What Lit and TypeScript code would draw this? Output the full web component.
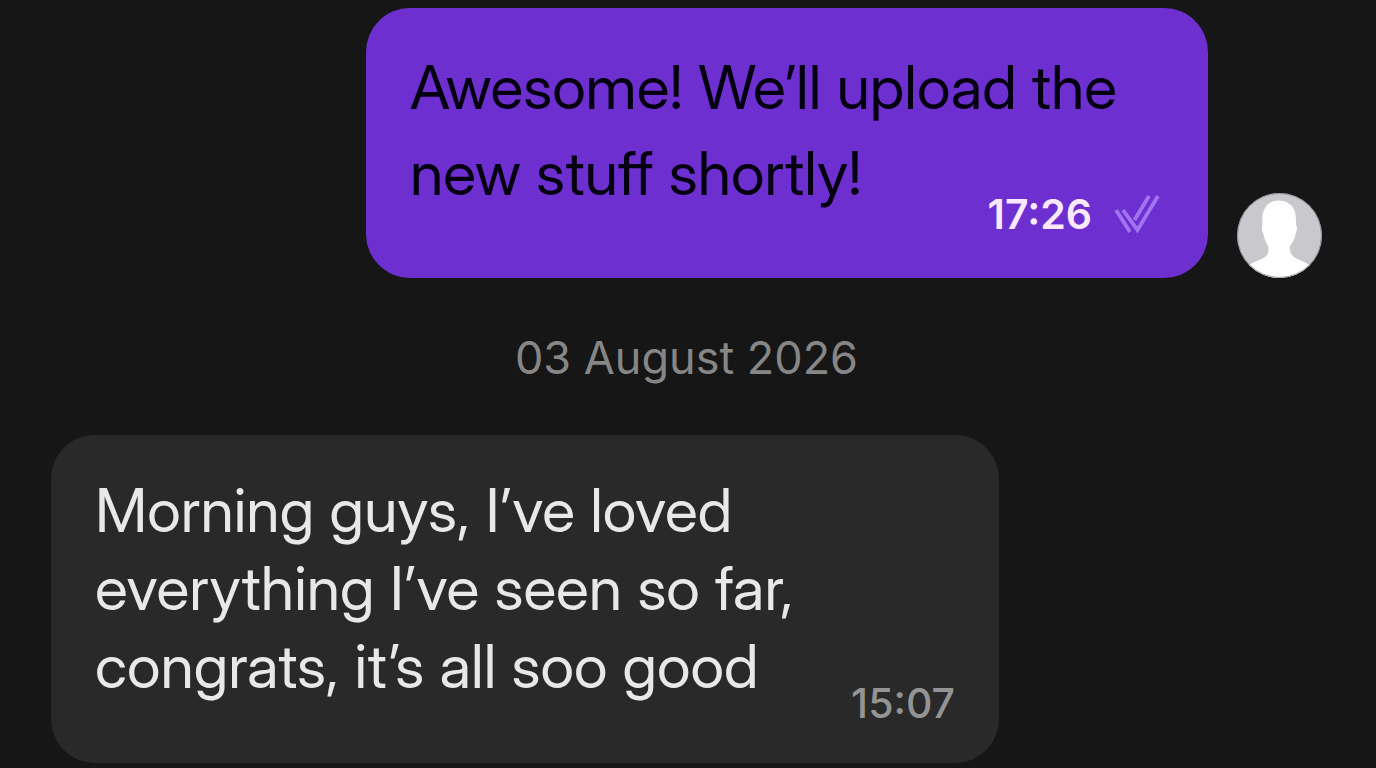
import { LitElement, html, css, nothing } from "lit";
import { customElement, property } from "lit/decorators.js";

interface Message {
  lines: string[];
  time: string;
  outgoing: boolean;
}

interface Day {
  label?: string;
  messages: Message[];
}

const days: Day[] = [
  {
    messages: [
      {
        lines: ["Awesome! We’ll upload the", "new stuff shortly!"],
        time: "17:26",
        outgoing: true,
      },
    ],
  },
  {
    label: "03 August 2026",
    messages: [
      {
        lines: [
          "Morning guys, I’ve loved",
          "everything I’ve seen so far,",
          "congrats, it’s all soo good",
        ],
        time: "15:07",
        outgoing: false,
      },
    ],
  },
];

@customElement("user-avatar")
export class UserAvatar extends LitElement {
  static styles = css`
    :host {
      display: block;
      flex: none;
      width: 85px;
      height: 85px;
    }
    .picture {
      display: block;
      width: 100%;
      height: 100%;
      border-radius: 50%;
    }
  `;

  render() {
    return html`<svg class="picture" viewBox="0 0 85 85" aria-hidden="true">
      <rect width="85" height="85" fill="#c8c8cd" />
      <path
        fill="#fff"
        d="M42 7.500C48 7.500 54 10.500 57 16C59 20 59 26 59 32C60.500 33 60 38 58.500 41C58 46 56 49 53 53C52.500 57 53 61 57 64C61 67 67 68 72.500 72V85H12V72C18 68 24 67 28 64C32 61 32 57 31 53C28.500 49 27 45 26.500 41C24.500 38 24.500 34 25.500 32C25 26 25 20 27.500 16C30.500 10 36 7.500 42 7.500Z"
      />
      <circle cx="42.500" cy="42.500" r="42" fill="none" stroke="#8f8f92" />
    </svg>`;
  }
}

@customElement("chat-message")
export class ChatMessage extends LitElement {
  @property({ attribute: false }) message!: Message;

  static styles = css`
    :host {
      display: block;
    }
    .row {
      display: flex;
      align-items: flex-end;
      gap: 29px;
    }
    .row.outgoing {
      justify-content: flex-end;
    }
    .bubble {
      box-sizing: border-box;
      width: 948px;
      max-width: 100%;
      padding: 36px 44px;
      border-radius: 44px;
      background: #292929;
      color: #e8e8e8;
    }
    .outgoing .bubble {
      width: 842px;
      padding-bottom: 40px;
      background: #6d2fcf;
      color: #050010;
    }
    .text {
      margin: 0;
      font-family: "Inter Display", Inter, "Liberation Sans", sans-serif;
      font-optical-sizing: auto;
      font-variation-settings: "opsz" 32;
      font-size: 61px;
      font-weight: 400;
      line-height: 78px;
    }
    .outgoing .text {
      line-height: 86px;
    }
    .line {
      display: block;
    }
    .meta {
      display: flex;
      justify-content: flex-end;
      align-items: center;
      gap: 22px;
      margin-top: -26px;
      font-size: 41px;
      font-weight: 500;
      line-height: 48px;
      color: #949494;
    }
    .outgoing .meta {
      padding-right: 4px;
      color: #fbeaff;
      font-weight: 600;
    }
    .ticks {
      display: block;
      width: 46px;
      height: 40px;
    }
  `;

  render() {
    const { lines, time, outgoing } = this.message;
    return html`
      <article class="row ${outgoing ? "outgoing" : "incoming"}">
        <div class="bubble">
          <p class="text">
            ${lines.map((line) => html`<span class="line">${line}</span>`)}
          </p>
          <div class="meta">
            <time>${time}</time>
            ${outgoing
              ? html`<svg
                  class="ticks"
                  viewBox="0 0 46 40"
                  role="img"
                  aria-label="Read"
                  fill="none"
                  stroke="#a274f0"
                  stroke-width="3.800"
                >
                  <path d="M2 16L16 38" />
                  <path d="M9 16L23.500 36L44 2" />
                  <path d="M20.500 26L35 2" />
                </svg>`
              : nothing}
          </div>
        </div>
        ${outgoing ? html`<user-avatar></user-avatar>` : nothing}
      </article>
    `;
  }
}

@customElement("app-root")
export class AppRoot extends LitElement {
  static styles = css`
    :host {
      display: block;
      box-sizing: border-box;
      min-height: 100vh;
      padding: 8px 54px 6px 51px;
      background: #161616;
      font-family: Inter, "Liberation Sans", sans-serif;
    }
    .date {
      margin: 0;
      padding: 56px 0 53px;
      color: #868686;
      font-size: 45px;
      font-weight: 400;
      line-height: 48px;
      text-align: center;
    }
  `;

  render() {
    return html`
      <main>
        ${days.map(
          (day) => html`
            <section>
              ${day.label ? html`<h2 class="date">${day.label}</h2>` : nothing}
              ${day.messages.map(
                (message) => html`<chat-message .message=${message}></chat-message>`,
              )}
            </section>
          `,
        )}
      </main>
    `;
  }
}
